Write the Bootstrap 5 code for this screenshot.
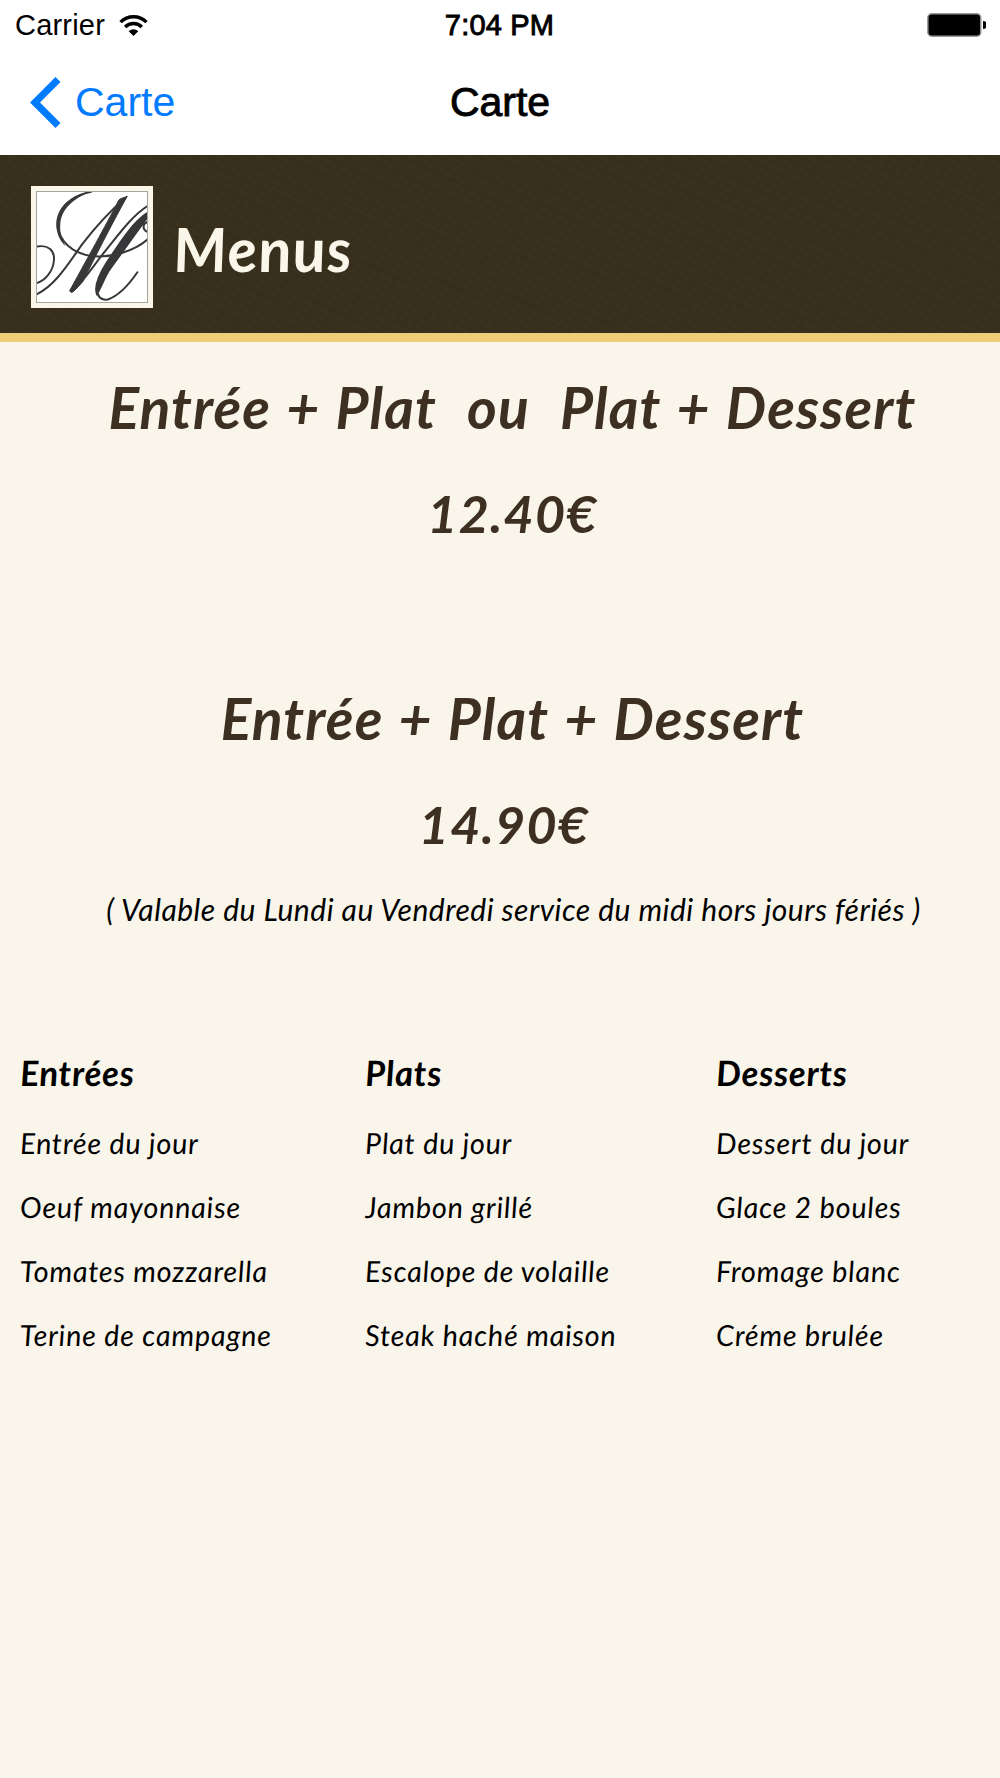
<!DOCTYPE html>
<html lang="fr">
<head>
  <meta charset="UTF-8">
  <meta name="viewport" content="width=device-width, initial-scale=1">
  <title>Carte</title>
  <link href="https://cdn.jsdelivr.net/npm/bootstrap@5.3.3/dist/css/bootstrap.min.css" rel="stylesheet">
  <style>
    body { background: #f9f5ea; color: #000; font-family: Lato, sans-serif; min-height: 1778px; }

    /* top bars */
    .ios { font-family: "Liberation Sans", Arial, sans-serif; height: 155px; }
    .ios-status { height: 50px; padding: 0 14px 0 15px; font-size: 29px; line-height: 54px; letter-spacing: .2px; }
    .ios-status > div > svg { margin-left: 14px; }
    .ios-nav { height: 105px; padding: 0 0 0 30px; font-size: 41px; line-height: 105px; }
    .ios-semi { -webkit-text-stroke: .9px #000; margin-left: -2px; }
    .ios-side { flex: 1 1 0; }
    .ios-nav a { color: #007aff; }
    .ios-nav a svg { margin-right: 14px; }

    /* banner */
    .banner {
      height: 187px; padding: 31px 31px 0; border-bottom: 9px solid #efcd77;
      background-color: #382f1d;
      background-image: repeating-linear-gradient(25deg, rgba(0,0,0,.04) 0 3px, transparent 3px 8px), repeating-linear-gradient(115deg, rgba(70,70,30,.1) 0 3px, transparent 3px 9px);
    }
    .logo { width: 122px; height: 122px; padding: 5px; background: #fbf6ea; }
    .logo svg { display: block; border: 1px solid #a9a59b; background: #fff; }
    .banner h1 { margin: 0 0 0 21px; font-size: 61px; font-weight: 700; font-style: italic; line-height: 125px; letter-spacing: 1.2px; color: #fbf6ea; transform: skewX(5deg); }

    /* formules */
    .formule { color: #3d3022; padding-left: 25px; }
    .formule h2 { margin: 0 0 9px; font-size: 57px; font-weight: 700; font-style: italic; line-height: 97px; letter-spacing: 1.1px; word-spacing: 1.5px; white-space: pre; }
    .formule p { margin: 0; font-size: 52px; font-weight: 700; font-style: italic; line-height: 97px; letter-spacing: 1.2px; }
    .formule-first { padding-top: 17px; height: 327px; }
    .formule-last { padding-top: 1px; }
    .formule-last p { margin-left: -17px; }
    .note { margin: 11px 0 0; padding-left: 27px; font-size: 30px; font-style: italic; line-height: 50px; letter-spacing: .5px; }

    /* colonnes */
    .choix { display: grid; grid-template-columns: 345px 351px 1fr; padding: 103px 0 0 20px; font-style: italic; }
    .choix h3 { margin: 0; font-size: 35px; font-weight: 700; line-height: 70px; letter-spacing: .6px; margin-bottom: 4px; transform: skewX(3deg); }
    .choix li { font-size: 29px; line-height: 64.1px; letter-spacing: .68px; transform: skewX(3deg); }
  </style>
</head>
<body>

<header class="ios bg-white">
  <div class="ios-status d-flex align-items-center">
    <div class="ios-side d-flex align-items-center">
      <span>Carrier</span>
      <svg width="29" height="23" viewBox="0 0 30 24" fill="none" stroke="#000" stroke-width="3.6">
        <path d="M1.5 8.5a19 19 0 0 1 27 0M6.3 13.5a12.3 12.3 0 0 1 17.4 0"/>
        <path d="M15 23l-5-5a7 7 0 0 1 10 0z" fill="#000" stroke="none"/>
      </svg>
    </div>
    <div class="ios-semi">7:04 PM</div>
    <div class="ios-side d-flex justify-content-end">
      <svg width="59" height="24" viewBox="0 0 59 24">
        <rect x=".8" y=".8" width="53" height="22.4" rx="4" fill="#000" stroke="#999" stroke-width="1.5"/>
        <path d="M56 8a4 4 0 0 1 0 8z" fill="#000"/>
      </svg>
    </div>
  </div>
  <nav class="ios-nav d-flex align-items-center">
    <div class="ios-side">
      <a href="#" class="d-flex align-items-center text-decoration-none">
        <svg width="31" height="51" viewBox="0 0 31 51" fill="none" stroke="#007aff" stroke-width="7"><path d="M28 2.500L5 25.500l23 23"/></svg>
        <span>Carte</span>
      </a>
    </div>
    <span class="ios-semi">Carte</span>
    <div class="ios-side pe-4 me-1"></div>
  </nav>
</header>

<section class="banner d-flex">
  <div class="logo">
    <svg width="112" height="112" viewBox="52 51 331 330" fill="none" stroke="#38383a" stroke-linecap="round">
      <path d="M215 50C150 62 114 100 115 150c3 50 45 85 100 93c65 7 135-18 170-50" stroke-width="6"/>
      <path d="M200 53C140 70 108 105 110 155c3 25 12 44 28 58C124 190 120 170 122 148c2-45 40-80 93-98z" fill="#38383a" stroke="none"/>
      <path d="M50 215c35-7 55 10 53 40c-2 35-28 63-53 70M50 359C110 330 150 260 190 205C225 160 270 110 318 68" stroke-width="6"/>
      <path d="M323 64c-11 4-21 6-25 11C270 130 215 230 150 348l5 5c15-7 20-18 35-33C225 250 270 160 323 64z" fill="#38383a" stroke="#38383a" stroke-width="3"/>
      <path d="M158 350C200 310 230 260 260 225C300 175 340 120 386 92" stroke-width="6"/>
      <path d="M386 112C340 140 300 205 262 262c-24 38-39 73-30 96c12-18 20-43 38-73C310 230 345 180 386 125z" fill="#38383a" stroke="#38383a" stroke-width="5"/>
      <path d="M233 335c-3 30 12 43 32 39c35-12 70-54 89-82M386 140c-18 5-18 25 0 31" stroke-width="6"/>
    </svg>
  </div>
  <h1>Menus</h1>
</section>

<main>
  <section class="formule formule-first text-center">
    <h2>Entrée + Plat  ou  Plat + Dessert</h2>
    <p>12.40€</p>
  </section>
  <section class="formule formule-last text-center">
    <h2>Entrée + Plat + Dessert</h2>
    <p>14.90€</p>
  </section>
  <p class="note text-center">( Valable du Lundi au Vendredi service du midi hors jours fériés )</p>

  <section class="choix">
    <div>
      <h3>Entrées</h3>
      <ul class="list-unstyled mb-0">
        <li>Entrée du jour</li>
        <li>Oeuf mayonnaise</li>
        <li>Tomates mozzarella</li>
        <li>Terine de campagne</li>
      </ul>
    </div>
    <div>
      <h3>Plats</h3>
      <ul class="list-unstyled mb-0">
        <li>Plat du jour</li>
        <li>Jambon grillé</li>
        <li>Escalope de volaille</li>
        <li>Steak haché maison</li>
      </ul>
    </div>
    <div>
      <h3>Desserts</h3>
      <ul class="list-unstyled mb-0">
        <li>Dessert du jour</li>
        <li>Glace 2 boules</li>
        <li>Fromage blanc</li>
        <li>Créme brulée</li>
      </ul>
    </div>
  </section>
</main>

<script src="https://cdn.jsdelivr.net/npm/bootstrap@5.3.3/dist/js/bootstrap.bundle.min.js"></script>
</body>
</html>
